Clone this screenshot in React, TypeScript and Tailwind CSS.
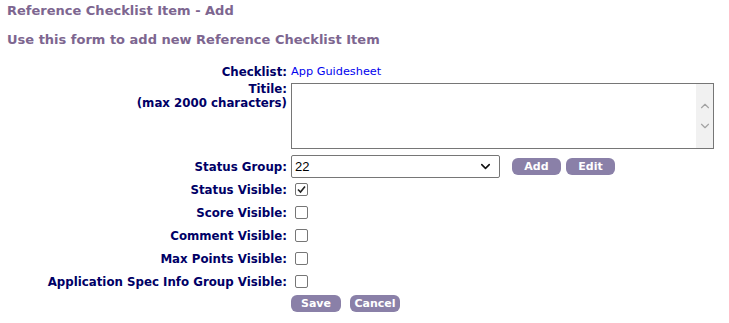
import { ChevronDown, ChevronUp } from 'lucide-react';

const font = "font-['Verdana','DejaVu_Sans',sans-serif]";

function Label({ children }: { children: React.ReactNode }) {
    return <div className="text-right text-[11.8px] font-bold leading-[14px] text-[#000066]">{children}</div>;
}

function Box({ checked }: { checked?: boolean }) {
    return (
        <span className="w-[13px] h-[13px] border border-[#767676] rounded-[2px] bg-white flex items-center justify-center">
            {checked && (
                <svg width="9" height="9" viewBox="0 0 9 9">
                    <path d="M1 4.5 L3.5 7 L8 1.5" fill="none" stroke="#222" strokeWidth="1.6" />
                </svg>
            )}
        </span>
    );
}

function Btn({ children, w }: { children: React.ReactNode; w: string }) {
    return (
        <button className={`${w} h-[17px] rounded-[6px] bg-[#8a80a8] text-white text-[11px] font-bold leading-none`}>
            {children}
        </button>
    );
}

export default function App() {
    const checks = [
        { label: 'Status Visible:', on: true },
        { label: 'Score Visible:' },
        { label: 'Comment Visible:' },
        { label: 'Max Points Visible:' },
        { label: 'Application Spec Info Group Visible:' },
    ];
    return (
        <div className={`${font} w-[729px] h-[323px] bg-white pl-[7px] pt-[3px]`}>
            <h1 className="text-[13px] font-bold text-[#7d6690] leading-[16px]">Reference Checklist Item - Add</h1>
            <p className="mt-[13px] text-[13px] font-bold text-[#7d6690] leading-[16px]">Use this form to add new Reference Checklist Item</p>
            <div className="mt-[17px] grid grid-cols-[280px_1fr] gap-x-[4px] items-center">
                <Label>Checklist:</Label>
                <div className="text-[11.3px] text-[#0000ee] leading-[14px]">App Guidesheet</div>

                <div className="self-start mt-[3px]">
                    <Label>Titile:<br />(max 2000 characters)</Label>
                </div>
                <div className="mt-[4px] w-[423px] h-[66px] border border-[#767676] flex">
                    <textarea className="flex-1 resize-none outline-none" />
                    <div className="w-[17px] bg-[#f1f1f1] flex flex-col items-center justify-center gap-[6px] text-[#a3a3a3]">
                        <ChevronUp size={14} strokeWidth={2} />
                        <ChevronDown size={14} strokeWidth={2} />
                    </div>
                </div>

                <div className="mt-[6px]"><Label>Status Group:</Label></div>
                <div className="mt-[6px] flex items-center">
                    <div className="w-[209px] h-[23px] border border-[#767676] rounded-[2px] flex items-center justify-between pl-[3px] pr-[6px] font-['Liberation_Sans',sans-serif] text-[13px] text-black">
                        <span>22</span>
                        <ChevronDown size={15} strokeWidth={2.5} className="text-[#111]" />
                    </div>
                    <div className="ml-[12px] flex gap-[5px]">
                        <Btn w="w-[49px]">Add</Btn>
                        <Btn w="w-[49px]">Edit</Btn>
                    </div>
                </div>

                {checks.map((c) => (
                    <div key={c.label} className="contents">
                        <div className="h-[23px] flex items-center justify-end">
                            <Label>{c.label}</Label>
                        </div>
                        <div className="h-[23px] flex items-center pl-[4px]">
                            <Box checked={c.on} />
                        </div>
                    </div>
                ))}

                <div />
                <div className="flex gap-[9px] mt-[2px]">
                    <Btn w="w-[50px]">Save</Btn>
                    <Btn w="w-[50px]">Cancel</Btn>
                </div>
            </div>
        </div>
    );
}
